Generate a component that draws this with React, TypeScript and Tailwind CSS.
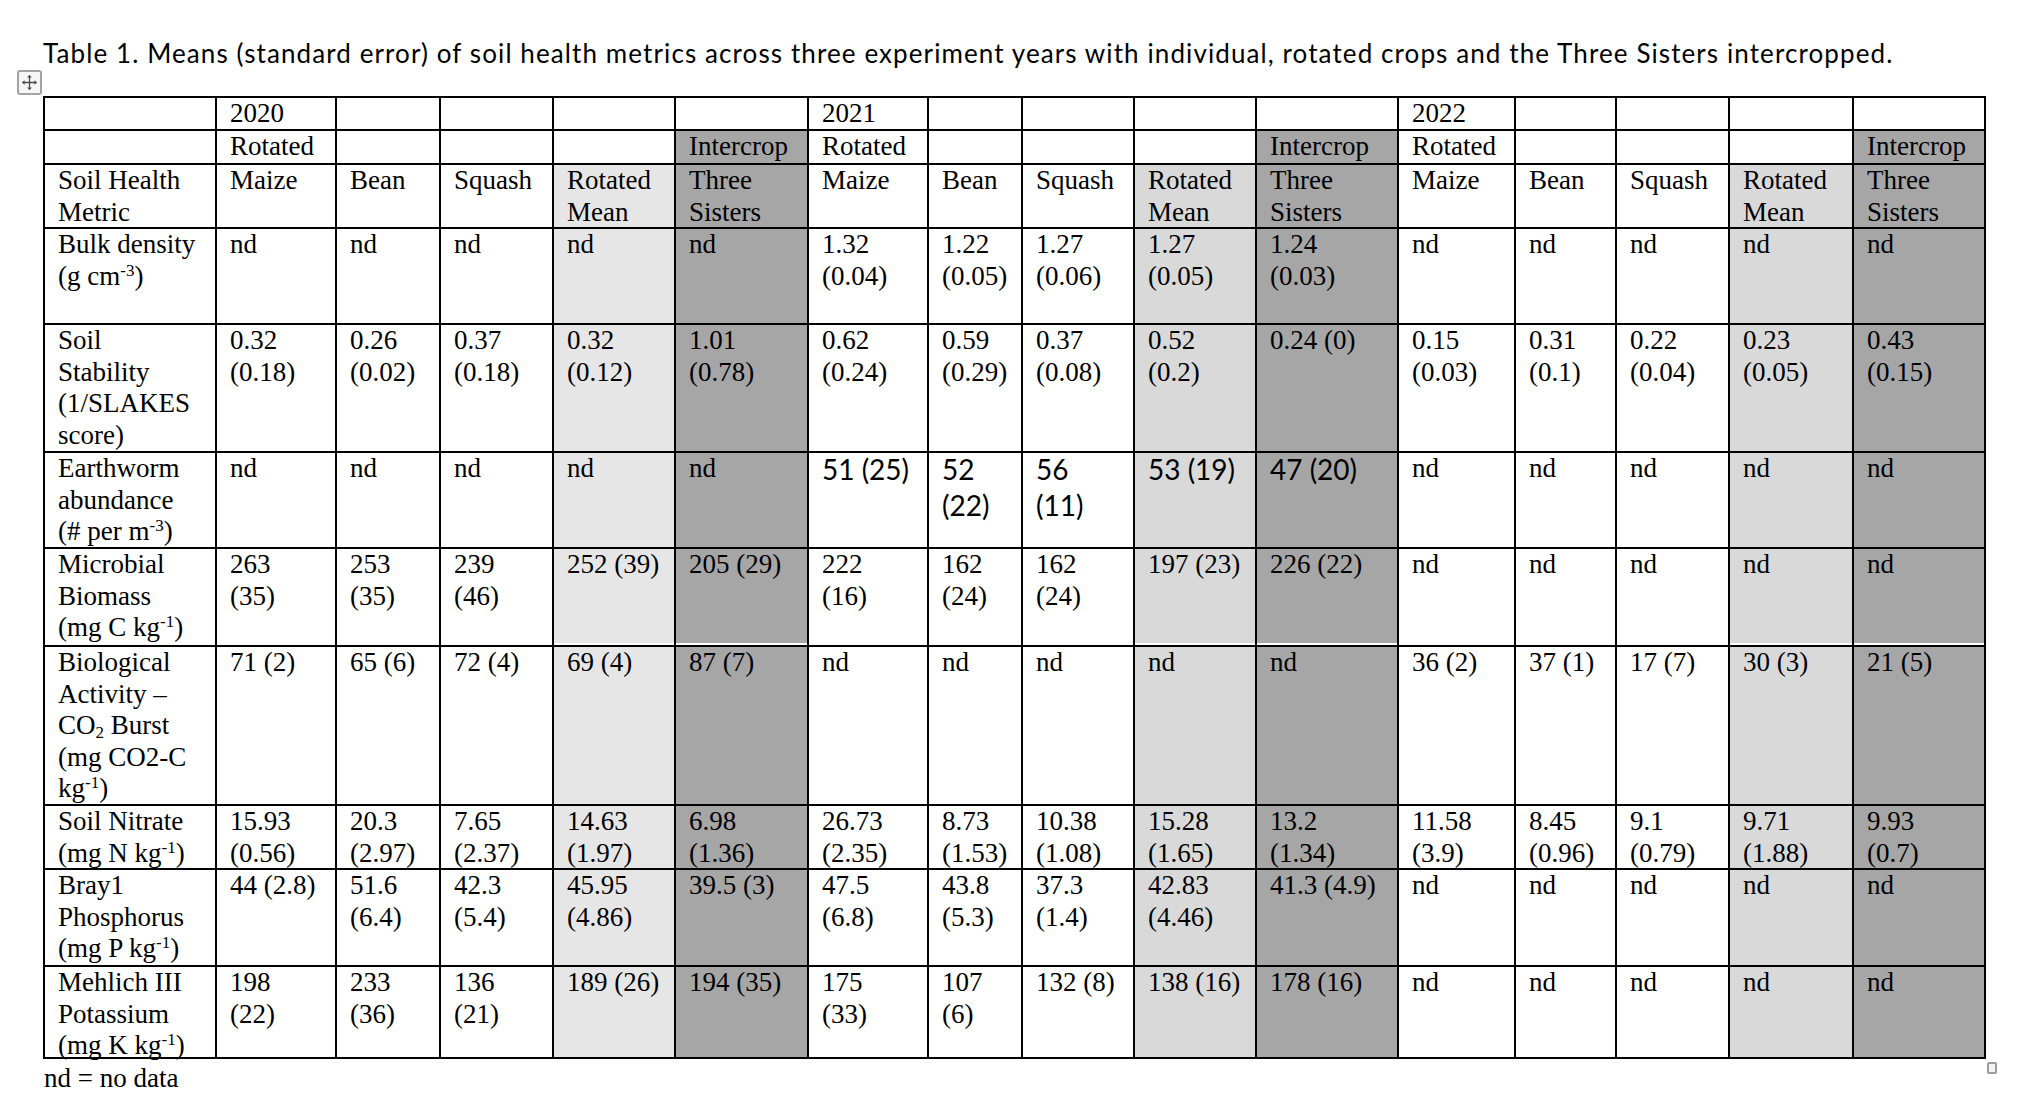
import type { ReactNode } from 'react';

const serif = "font-['Liberation_Serif',serif]";

function Sup({ children }: { children: ReactNode }) {
  return <span className="align-[9px] text-[17px] leading-[0]">{children}</span>;
}

function Sub({ children }: { children: ReactNode }) {
  return <span className="align-[-4px] text-[17px] leading-[0]">{children}</span>;
}

const header0 = ['', '2020', '', '', '', '', '2021', '', '', '', '', '2022', '', '', '', ''];
const header1 = ['', 'Rotated', '', '', '', 'Intercrop', 'Rotated', '', '', '', 'Intercrop', 'Rotated', '', '', '', 'Intercrop'];
const crops = ['Maize', 'Bean', 'Squash', 'Rotated\nMean', 'Three\nSisters'];
const header2 = ['Soil Health\nMetric', ...crops, ...crops, ...crops];

const nd5 = ['nd', 'nd', 'nd', 'nd', 'nd'];

interface MetricRow {
  label: ReactNode;
  values: string[];
  sansCols?: number[];
}

const rows: MetricRow[] = [
  {
    label: (
      <>
        Bulk density
        <br />
        (g cm<Sup>-3</Sup>)
      </>
    ),
    values: [...nd5, '1.32\n(0.04)', '1.22\n(0.05)', '1.27\n(0.06)', '1.27\n(0.05)', '1.24\n(0.03)', ...nd5],
  },
  {
    label: (
      <>
        Soil
        <br />
        Stability
        <br />
        (1/SLAKES
        <br />
        score)
      </>
    ),
    values: [
      '0.32\n(0.18)', '0.26\n(0.02)', '0.37\n(0.18)', '0.32\n(0.12)', '1.01\n(0.78)',
      '0.62\n(0.24)', '0.59\n(0.29)', '0.37\n(0.08)', '0.52\n(0.2)', '0.24 (0)',
      '0.15\n(0.03)', '0.31\n(0.1)', '0.22\n(0.04)', '0.23\n(0.05)', '0.43\n(0.15)',
    ],
  },
  {
    label: (
      <>
        Earthworm
        <br />
        abundance
        <br />
        (# per m<Sup>-3</Sup>)
      </>
    ),
    values: [...nd5, '51 (25)', '52\n(22)', '56\n(11)', '53 (19)', '47 (20)', ...nd5],
    sansCols: [5, 6, 7, 8, 9],
  },
  {
    label: (
      <>
        Microbial
        <br />
        Biomass
        <br />
        (mg C kg<Sup>-1</Sup>)
      </>
    ),
    values: [
      '263\n(35)', '253\n(35)', '239\n(46)', '252 (39)', '205 (29)',
      '222\n(16)', '162\n(24)', '162\n(24)', '197 (23)', '226 (22)',
      ...nd5,
    ],
  },
  {
    label: (
      <>
        Biological
        <br />
        Activity –
        <br />
        CO<Sub>2</Sub> Burst
        <br />
        (mg CO2-C
        <br />
        kg<Sup>-1</Sup>)
      </>
    ),
    values: [
      '71 (2)', '65 (6)', '72 (4)', '69 (4)', '87 (7)',
      ...nd5,
      '36 (2)', '37 (1)', '17 (7)', '30 (3)', '21 (5)',
    ],
  },
  {
    label: (
      <>
        Soil Nitrate
        <br />
        (mg N kg<Sup>-1</Sup>)
      </>
    ),
    values: [
      '15.93\n(0.56)', '20.3\n(2.97)', '7.65\n(2.37)', '14.63\n(1.97)', '6.98\n(1.36)',
      '26.73\n(2.35)', '8.73\n(1.53)', '10.38\n(1.08)', '15.28\n(1.65)', '13.2\n(1.34)',
      '11.58\n(3.9)', '8.45\n(0.96)', '9.1\n(0.79)', '9.71\n(1.88)', '9.93\n(0.7)',
    ],
  },
  {
    label: (
      <>
        Bray1
        <br />
        Phosphorus
        <br />
        (mg P kg<Sup>-1</Sup>)
      </>
    ),
    values: [
      '44 (2.8)', '51.6\n(6.4)', '42.3\n(5.4)', '45.95\n(4.86)', '39.5 (3)',
      '47.5\n(6.8)', '43.8\n(5.3)', '37.3\n(1.4)', '42.83\n(4.46)', '41.3 (4.9)',
      ...nd5,
    ],
  },
  {
    label: (
      <>
        Mehlich III
        <br />
        Potassium
        <br />
        (mg K kg<Sup>-1</Sup>)
      </>
    ),
    values: [
      '198\n(22)', '233\n(36)', '136\n(21)', '189 (26)', '194 (35)',
      '175\n(33)', '107\n(6)', '132 (8)', '138 (16)', '178 (16)',
      ...nd5,
    ],
  },
];

// shading: rotated mean columns from the crop header down, intercrop from its label down
function cellBg(row: number, col: number) {
  if (col === 0) return 'bg-white';
  const k = (col - 1) % 5;
  if (k === 4 && row >= 1) return 'bg-[#a6a6a6]';
  if (k === 3 && row >= 2) return col === 4 ? 'bg-[#e7e6e6]' : 'bg-[#d9d9d9]';
  return 'bg-white';
}

function Cell({ row, col, children, sans }: { row: number; col: number; children: ReactNode; sans?: boolean }) {
  const gapLine = row === 6 && cellBg(row, col) !== 'bg-white' ? 'shadow-[inset_0_-2px_0_#fff]' : '';
  return (
    <div className={`${cellBg(row, col)} ${gapLine} pl-[13px] pr-[2px] whitespace-pre-line text-black`}>
      {sans ? (
        <div className="font-['Lato',sans-serif] text-[28px] leading-[36px] -mt-[2px]">{children}</div>
      ) : (
        children
      )}
    </div>
  );
}

function MoveHandle() {
  return (
    <div className="ml-[17px] mt-[2px] flex h-[25px] w-[25px] items-center justify-center rounded-[3px] border-2 border-[#a3a3a3] bg-[#f7f7f7]">
      <svg width="17" height="17" viewBox="0 0 16 16">
        <path d="M8 2.5v11M2.5 8h11" stroke="#4a4a4a" strokeWidth="1.2" />
        <path d="M8 0.8 5.8 3.4h4.4zM8 15.2l-2.2-2.6h4.4zM0.8 8l2.6-2.2v4.4zM15.2 8l-2.6-2.2v4.4z" fill="#4a4a4a" />
      </svg>
    </div>
  );
}

export default function App() {
  const headers = [header0, header1, header2];
  return (
    <div className={`h-[1110px] w-[2026px] overflow-hidden bg-white text-black ${serif}`}>
      <div className="ml-[43px] pt-[38px] font-['Lato',sans-serif] text-[26px] leading-[30px] tracking-[1.1px] whitespace-nowrap">
        Table 1. Means (standard error) of soil health metrics across three experiment years with individual, rotated crops and the Three Sisters intercropped.
      </div>
      <MoveHandle />
      <div className="relative ml-[43px] mt-[1px] w-max">
        <div className="grid grid-cols-[170px_118px_102px_111px_120px_131px_118px_92px_110px_120px_140px_115px_99px_111px_122px_130px] grid-rows-[31px_32px_62px_94px_126px_94px_96px_157px_62px_95px_90px] gap-[2px] bg-black p-[2px] text-[27px] leading-[31.5px]">
          {headers.map((h, r) =>
            h.map((text, c) => (
              <Cell key={`h${r}-${c}`} row={r} col={c}>
                {text}
              </Cell>
            )),
          )}
          {rows.map((m, i) => {
            const r = i + 3;
            return [
              <Cell key={`l${r}`} row={r} col={0}>
                {m.label}
              </Cell>,
              ...m.values.map((v, j) => (
                <Cell key={`v${r}-${j}`} row={r} col={j + 1} sans={m.sansCols?.includes(j)}>
                  {v}
                </Cell>
              )),
            ];
          })}
        </div>
        {/* table resize handle */}
        <div className="absolute left-full top-full ml-[1px] mt-[3px] h-[12px] w-[10px] rounded-[2px] border-2 border-[#9c9c9c] bg-[#f4f4f4]" />
      </div>
      <div className="ml-[44px] mt-[4px] text-[27px] leading-[31.5px]">nd = no data</div>
    </div>
  );
}
